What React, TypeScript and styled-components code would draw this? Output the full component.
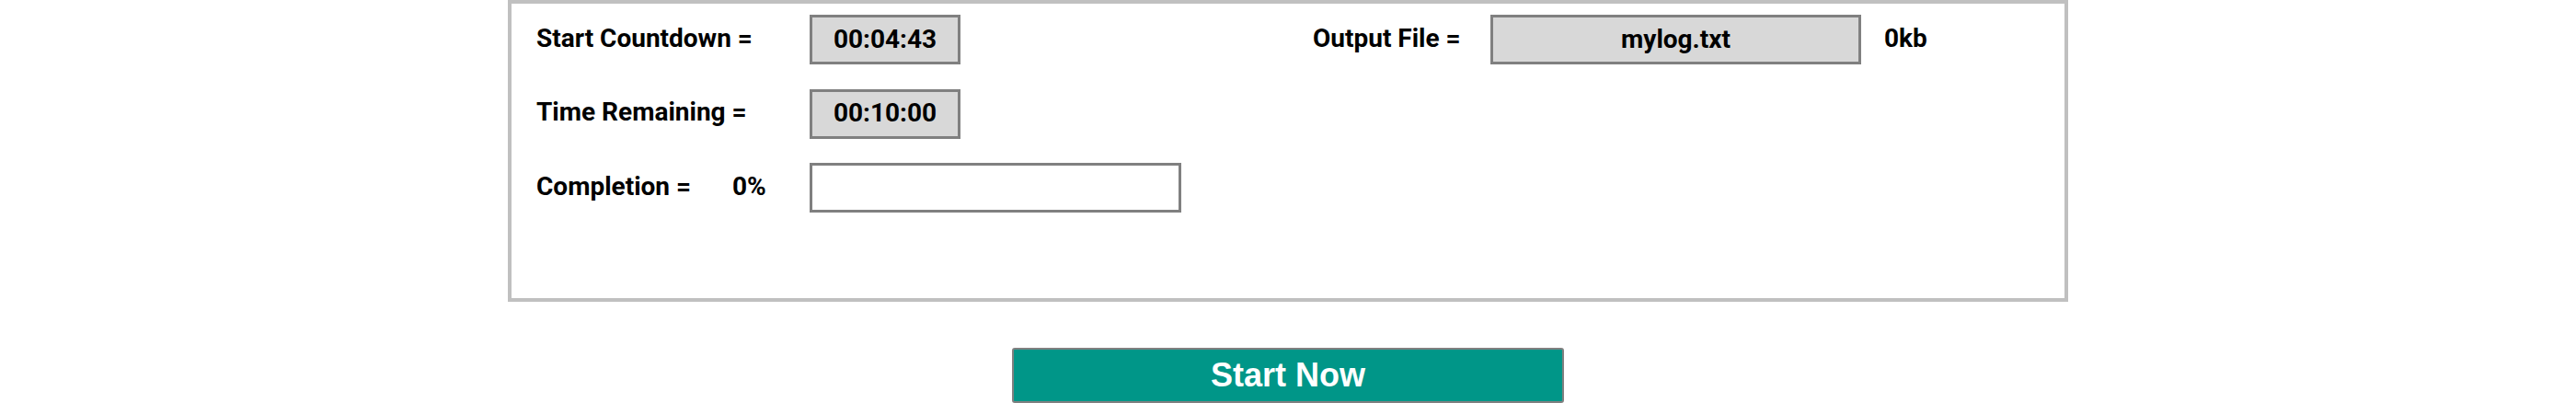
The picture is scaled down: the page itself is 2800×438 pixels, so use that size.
import styled, { createGlobalStyle } from "styled-components";

const GlobalStyle = createGlobalStyle`
  body {
    margin: 0;
    background: #fff;
    font-family: Roboto, "Liberation Sans", sans-serif;
  }
`;

const Page = styled.div`
  display: flex;
  flex-direction: column;
  align-items: center;
`;

const Panel = styled.div`
  box-sizing: border-box;
  width: 1696px;
  height: 328px;
  border: 4px solid #c0c0c0;
  padding: 12px 0 0 27px;
  display: grid;
  grid-template-columns: 844px 1fr;
  align-items: start;
`;

const FieldGrid = styled.div`
  display: grid;
  grid-template-columns: 213px 84px auto;
  grid-auto-rows: 54px;
  row-gap: 26.5px;
  align-items: center;
  justify-items: start;
`;

const OutputRow = styled.div`
  display: grid;
  grid-template-columns: 193px 403px auto;
  grid-auto-rows: 54px;
  align-items: center;
`;

const Label = styled.span<{ $span?: number }>`
  grid-column: span ${(p) => p.$span ?? 1};
  padding-bottom: 4px;
  font-size: 28px;
  font-weight: 700;
  color: #000;
  white-space: nowrap;
`;

const Field = styled.div<{ $width: number; $empty?: boolean }>`
  box-sizing: border-box;
  width: ${(p) => p.$width}px;
  height: 100%;
  border: 3px solid #808080;
  background: ${(p) => (p.$empty ? "#fff" : "#d8d8d8")};
  display: flex;
  align-items: center;
  justify-content: center;
  padding-bottom: 2px;
  font-size: 28px;
  font-weight: 700;
  color: #000;
`;

const Size = styled.span`
  margin-left: 25px;
  padding-bottom: 4px;
  font-size: 28px;
  font-weight: 700;
  color: #000;
`;

const StartButton = styled.button`
  box-sizing: border-box;
  margin-top: 50px;
  width: 600px;
  height: 60px;
  border: 2px solid #808080;
  border-radius: 3px;
  background: #009688;
  color: #fff;
  font-family: "Liberation Sans", Arial, sans-serif;
  font-size: 36px;
  font-weight: 700;
  cursor: pointer;
`;

export default function App() {
  return (
    <>
      <GlobalStyle />
      <Page>
        <Panel>
          <FieldGrid>
            <Label $span={2}>Start Countdown =</Label>
            <Field $width={164}>00:04:43</Field>
            <Label $span={2}>Time Remaining =</Label>
            <Field $width={164}>00:10:00</Field>
            <Label>Completion =</Label>
            <Label>0%</Label>
            <Field $width={404} $empty />
          </FieldGrid>
          <OutputRow>
            <Label>Output File =</Label>
            <Field $width={403}>mylog.txt</Field>
            <Size>0kb</Size>
          </OutputRow>
        </Panel>
        <StartButton>Start Now</StartButton>
      </Page>
    </>
  );
}
